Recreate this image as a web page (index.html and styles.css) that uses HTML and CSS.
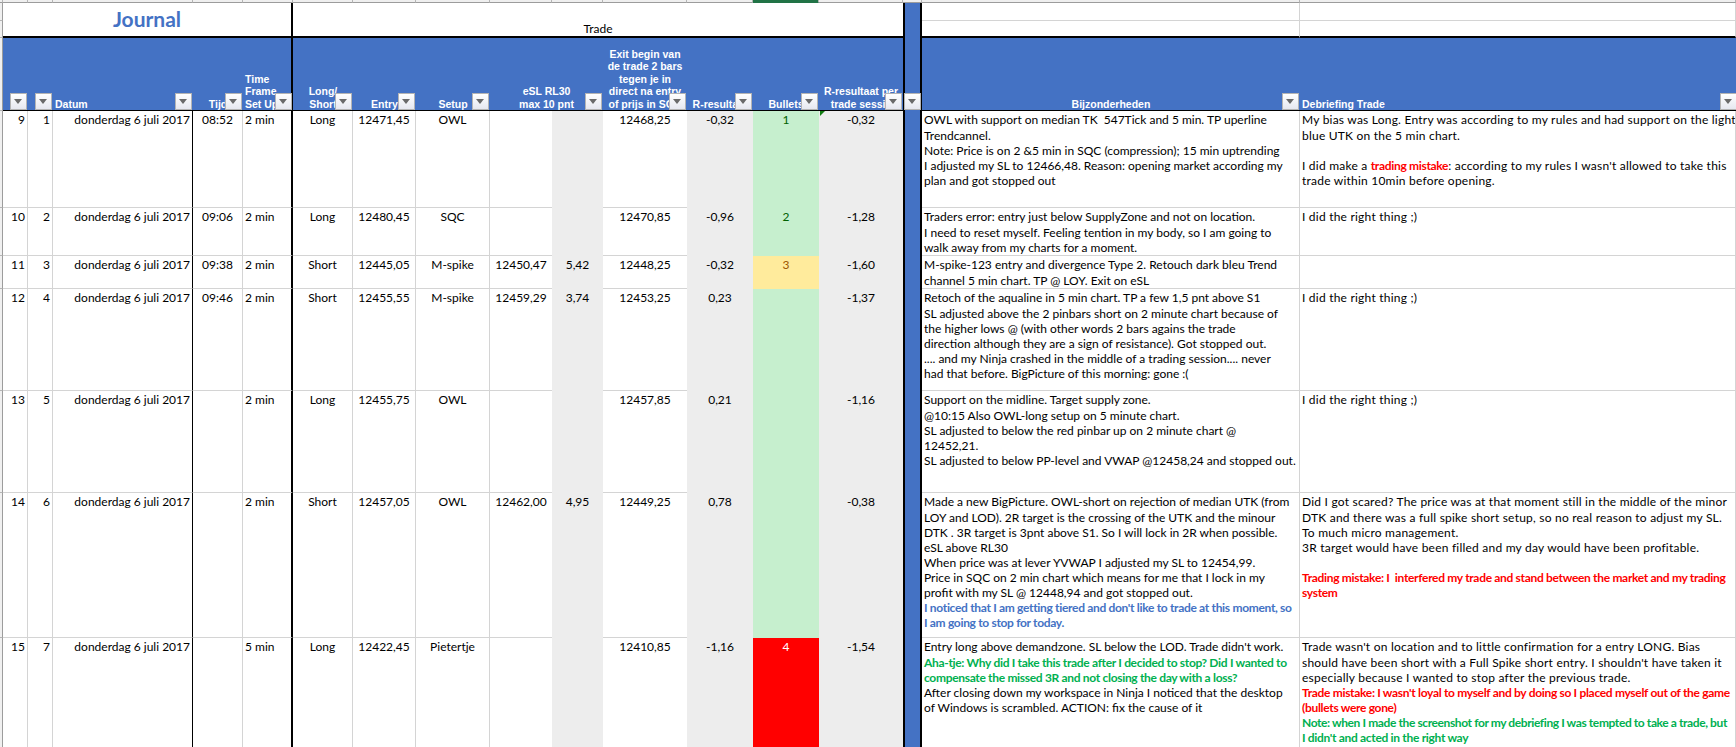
FILE: index.html
```html
<!DOCTYPE html>
<html lang="en">
<head>
    <meta charset="UTF-8">
    <title>Journal</title>
    <link rel="stylesheet" href="styles.css">
</head>
<body>
    <table class="sheet">
        <colgroup>
            <col class="w-hd"><col class="w-nr"><col class="w-nr"><col class="w-date"><col class="w-time"><col class="w-tf">
            <col class="w-ls"><col class="w-entry"><col class="w-setup"><col class="w-esl"><col class="w-delta"><col class="w-exit">
            <col class="w-res"><col class="w-bullet"><col class="w-sess"><col class="w-sep"><col class="w-note"><col class="w-deb">
        </colgroup>

        <!-- column header remnants at the top -->
        <tr class="h-strip">
            <td class="strip"></td><td class="strip"></td><td class="strip"></td><td class="strip"></td><td class="strip"></td><td class="strip"></td>
            <td class="strip"></td><td class="strip"></td><td class="strip"></td><td class="strip"></td><td class="strip"></td><td class="strip"></td>
            <td class="strip"></td><td class="strip selected"></td><td class="strip"></td><td class="strip"></td><td class="strip"></td><td class="strip"></td>
        </tr>

        <!-- titles -->
        <tr class="h-a">
            <td class="hd"></td>
            <td class="title" colspan="5" rowspan="2">Journal</td>
            <td class="trade" colspan="9" rowspan="2">Trade</td>
            <td class="sep" rowspan="10"><i class="fb fb-sep"></i></td>
            <td class="blank"></td>
            <td class="blank"></td>
        </tr>
        <tr class="h-b">
            <td class="hd"></td>
            <td class="blank thick"></td>
            <td class="blank thick"></td>
        </tr>

        <!-- blue header -->
        <tr class="h-head">
            <td class="hd"></td>
            <th><i class="fb"></i></th>
            <th><i class="fb"></i></th>
            <th class="left pad-date">Datum<i class="fb"></i></th>
            <th>Tijd<i class="fb"></i></th>
            <th class="left bk">Time<br>Frame<br>Set Up<i class="fb fb-over"></i></th>
            <th>Long/<br>Short<i class="fb"></i></th>
            <th>Entry<i class="fb"></i></th>
            <th>Setup<i class="fb"></i></th>
            <th colspan="2">eSL RL30<br>max 10 pnt<i class="fb"></i></th>
            <th>Exit begin van<br>de trade 2 bars<br>tegen je in<br>direct na entry<br>of prijs in SQC<i class="fb"></i></th>
            <th>R-resultaat<i class="fb"></i></th>
            <th>Bullets<i class="fb"></i></th>
            <th>R-resultaat per<br>trade sessie<i class="fb"></i></th>
            <th>Bijzonderheden<i class="fb"></i></th>
            <th class="left">Debriefing Trade<i class="fb fb-over"></i></th>
        </tr>

        <tr class="h-97">
            <td class="hd"></td>
            <td class="r">9</td><td class="r">1</td><td class="r bk1">donderdag 6 juli 2017</td><td class="c">08:52</td><td class="l bk">2 min</td>
            <td class="c">Long</td><td class="c">12471,45</td><td class="c">OWL</td><td class="c nr"></td><td class="c g"></td><td class="c nr">12468,25</td>
            <td class="c g">-0,32</td><td class="c ok">1</td><td class="c g flag">-0,32</td>
            <td class="l"><span class="ln">OWL with support on median TK  547Tick and 5 min. TP uperline</span><span class="ln">Trendcannel.</span><span class="ln">Note: Price is on 2 &amp;5 min in SQC (compression); 15 min uptrending</span><span class="ln">I adjusted my SL to 12466,48. Reason: opening market according my</span><span class="ln">plan and got stopped out</span></td>
            <td class="l deb"><span class="ln">My bias was Long. Entry was according to my rules and had support on the light</span><span class="ln">blue UTK on the 5 min chart.</span><span class="ln">&nbsp;</span><span class="ln">I did make a <b class="red">trading mistake</b>: according to my rules I wasn't allowed to take this</span><span class="ln">trade within 10min before opening.</span></td>
        </tr>
        <tr class="h-48">
            <td class="hd"></td>
            <td class="r">10</td><td class="r">2</td><td class="r bk1">donderdag 6 juli 2017</td><td class="c">09:06</td><td class="l bk">2 min</td>
            <td class="c">Long</td><td class="c">12480,45</td><td class="c">SQC</td><td class="c nr"></td><td class="c g"></td><td class="c nr">12470,85</td>
            <td class="c g">-0,96</td><td class="c ok">2</td><td class="c g">-1,28</td>
            <td class="l"><span class="ln">Traders error: entry just below SupplyZone and not on location.</span><span class="ln">I need to reset myself. Feeling tention in my body, so I am going to</span><span class="ln">walk away from my charts for a moment.</span></td>
            <td class="l deb"><span class="ln">I did the right thing ;)</span></td>
        </tr>
        <tr class="h-32">
            <td class="hd"></td>
            <td class="r">11</td><td class="r">3</td><td class="r bk1">donderdag 6 juli 2017</td><td class="c">09:38</td><td class="l bk">2 min</td>
            <td class="c">Short</td><td class="c">12445,05</td><td class="c">M-spike</td><td class="c nr">12450,47</td><td class="c g">5,42</td><td class="c nr">12448,25</td>
            <td class="c g">-0,32</td><td class="c warn">3</td><td class="c g">-1,60</td>
            <td class="l"><span class="ln">M-spike-123 entry and divergence Type 2. Retouch dark bleu Trend</span><span class="ln">channel 5 min chart. TP @ LOY. Exit on eSL</span></td>
            <td class="l deb"></td>
        </tr>
        <tr class="h-102">
            <td class="hd"></td>
            <td class="r">12</td><td class="r">4</td><td class="r bk1">donderdag 6 juli 2017</td><td class="c">09:46</td><td class="l bk">2 min</td>
            <td class="c">Short</td><td class="c">12455,55</td><td class="c">M-spike</td><td class="c nr">12459,29</td><td class="c g">3,74</td><td class="c nr">12453,25</td>
            <td class="c g">0,23</td><td class="c ok"></td><td class="c g">-1,37</td>
            <td class="l"><span class="ln">Retoch of the aqualine in 5 min chart. TP a few 1,5 pnt above S1</span><span class="ln">SL adjusted above the 2 pinbars short on 2 minute chart because of</span><span class="ln">the higher lows @ (with other words 2 bars agains the trade</span><span class="ln">direction although they are a sign of resistance). Got stopped out.</span><span class="ln">.... and my Ninja crashed in the middle of a trading session.... never</span><span class="ln">had that before. BigPicture of this morning: gone :(</span></td>
            <td class="l deb"><span class="ln">I did the right thing ;)</span></td>
        </tr>
        <tr class="h-102">
            <td class="hd"></td>
            <td class="r">13</td><td class="r">5</td><td class="r bk1">donderdag 6 juli 2017</td><td class="c"></td><td class="l bk">2 min</td>
            <td class="c">Long</td><td class="c">12455,75</td><td class="c">OWL</td><td class="c nr"></td><td class="c g"></td><td class="c nr">12457,85</td>
            <td class="c g">0,21</td><td class="c ok"></td><td class="c g">-1,16</td>
            <td class="l"><span class="ln">Support on the midline. Target supply zone.</span><span class="ln">@10:15 Also OWL-long setup on 5 minute chart.</span><span class="ln">SL adjusted to below the red pinbar up on 2 minute chart @</span><span class="ln">12452,21.</span><span class="ln">SL adjusted to below PP-level and VWAP @12458,24 and stopped out.</span></td>
            <td class="l deb"><span class="ln">I did the right thing ;)</span></td>
        </tr>
        <tr class="h-145">
            <td class="hd"></td>
            <td class="r">14</td><td class="r">6</td><td class="r bk1">donderdag 6 juli 2017</td><td class="c"></td><td class="l bk">2 min</td>
            <td class="c">Short</td><td class="c">12457,05</td><td class="c">OWL</td><td class="c nr">12462,00</td><td class="c g">4,95</td><td class="c nr">12449,25</td>
            <td class="c g">0,78</td><td class="c ok"></td><td class="c g">-0,38</td>
            <td class="l"><span class="ln">Made a new BigPicture. OWL-short on rejection of median UTK (from</span><span class="ln">LOY and LOD). 2R target is the crossing of the UTK and the minour</span><span class="ln">DTK . 3R target is 3pnt above S1. So I will lock in 2R when possible.</span><span class="ln">eSL above RL30</span><span class="ln">When price was at lever YVWAP I adjusted my SL to 12454,99.</span><span class="ln">Price in SQC on 2 min chart which means for me that I lock in my</span><span class="ln">profit with my SL @ 12448,94 and got stopped out.</span><span class="ln blue">I noticed that I am getting tiered and don't like to trade at this moment, so</span><span class="ln blue">I am going to stop for today.</span></td>
            <td class="l deb"><span class="ln">Did I got scared? The price was at that moment still in the middle of the minor</span><span class="ln">DTK and there was a full spike short setup, so no real reason to adjust my SL.</span><span class="ln">To much micro management.</span><span class="ln">3R target would have been filled and my day would have been profitable.</span><span class="ln">&nbsp;</span><span class="ln red">Trading mistake: I  interfered my trade and stand between the market and my trading</span><span class="ln red">system</span></td>
        </tr>
        <tr class="h-111">
            <td class="hd"></td>
            <td class="r">15</td><td class="r">7</td><td class="r bk1">donderdag 6 juli 2017</td><td class="c"></td><td class="l bk">5 min</td>
            <td class="c">Long</td><td class="c">12422,45</td><td class="c">Pietertje</td><td class="c nr"></td><td class="c g"></td><td class="c nr">12410,85</td>
            <td class="c g">-1,16</td><td class="c bad">4</td><td class="c g">-1,54</td>
            <td class="l"><span class="ln">Entry long above demandzone. SL below the LOD. Trade didn't work.</span><span class="ln green">Aha-tje: Why did I take this trade after I decided to stop? Did I wanted to</span><span class="ln green">compensate the missed 3R and not closing the day with a loss?</span><span class="ln">After closing down my workspace in Ninja I noticed that the desktop</span><span class="ln">of Windows is scrambled. ACTION: fix the cause of it</span></td>
            <td class="l deb"><span class="ln">Trade wasn't on location and to little confirmation for a entry LONG. Bias</span><span class="ln">should have been short with a Full Spike short entry. I shouldn't have taken it</span><span class="ln">especially because I wanted to stop after the previous trade.</span><span class="ln red">Trade mistake: I wasn't loyal to myself and by doing so I placed myself out of the game</span><span class="ln red">(bullets were gone)</span><span class="ln green tight">Note: when I made the screenshot for my debriefing I was tempted to take a trade, but</span><span class="ln green">I didn't and acted in the right way</span></td>
        </tr>
    </table>
</body>
</html>
```

FILE: styles.css
```css
html, body {
    margin: 0;
    height: 747px;
    overflow: hidden;
    background: #fff;
}

.sheet {
    table-layout: fixed;
    width: 1736px;
    border-collapse: separate;
    border-spacing: 0;
    font-family: Lato, "Liberation Sans", sans-serif;
    font-size: 12px;
    line-height: 15px;
    color: #000;
}

/* column widths */
.w-hd { width: 3px; }
.w-nr { width: 25px; }
.w-date { width: 140px; }
.w-time { width: 50px; }
.w-tf { width: 50px; }
.w-ls { width: 60px; }
.w-entry { width: 63px; }
.w-setup { width: 74px; }
.w-esl { width: 62px; }
.w-delta { width: 51px; }
.w-exit { width: 84px; }
.w-res { width: 66px; }
.w-bullet { width: 66px; }
.w-sess { width: 84px; }
.w-sep { width: 19px; }
.w-note { width: 378px; }
.w-deb { width: 436px; }

/* row heights */
.h-strip { height: 3px; }
.h-a { height: 18px; }
.h-b { height: 17px; }
.h-head { height: 73px; }
.h-97 { height: 97px; }
.h-48 { height: 48px; }
.h-32 { height: 32px; }
.h-102 { height: 102px; }
.h-145 { height: 145px; }
.h-111 { height: 111px; }

td, th {
    padding: 0;
    box-sizing: border-box;
}

td {
    position: relative;
    vertical-align: top;
    white-space: nowrap;
    overflow: hidden;
    padding-top: 1px;
    border-right: 1px solid #d4d4d4;
    border-bottom: 1px solid #d4d4d4;
}

.strip {
    padding: 0;
    background: #efefef;
    border-right: 1px solid #b5b5b5;
    border-bottom: 1px solid #9c9c9c;
}

.strip.selected {
    background: #217346;
    border-bottom-color: #217346;
}

.hd {
    padding: 0;
    background: #f0f0f0;
    border-right: 1px solid #9c9c9c;
    border-bottom: 1px solid #b5b5b5;
}

.title {
    padding: 0 0 2px;
    text-align: center;
    vertical-align: middle;
    color: #4472c4;
    font-size: 21px;
    line-height: 30px;
    font-weight: bold;
    border-right: 2px solid #000;
    border-bottom: 2px solid #000;
}

.trade {
    padding: 0;
    text-align: center;
    vertical-align: bottom;
    border-right: 0;
    border-bottom: 2px solid #000;
}

.sep {
    padding: 0;
    overflow: visible;
    background: #4472c4;
    border-left: 2px solid #000;
    border-right: 2px solid #000;
    border-bottom: 0;
}

.blank {
    padding: 0;
}

.blank.thick {
    border-bottom: 2px solid #000;
}

/* blue header cells */
th {
    position: relative;
    vertical-align: bottom;
    text-align: center;
    white-space: nowrap;
    background: #4472c4;
    color: #fff;
    font-family: "Liberation Sans", Arial, sans-serif;
    font-size: 10.5px;
    line-height: 12.5px;
    font-weight: bold;
    border-bottom: 1px solid #000;
}

th.left {
    text-align: left;
    padding-left: 2px;
}

th.pad-date {
    padding-left: 2px;
}

/* filter buttons */
.fb {
    position: absolute;
    right: 1px;
    bottom: 0;
    width: 17px;
    height: 17px;
    box-sizing: border-box;
    border: 1px solid #b4b4b4;
    background: linear-gradient(#ffffff, #e6e8f0);
}

.fb::after {
    content: "";
    position: absolute;
    left: 3px;
    top: 5px;
    border-left: 4.5px solid transparent;
    border-right: 4.5px solid transparent;
    border-top: 5px solid #6a6a6a;
}

.fb-over {
    right: -1px;
}

.fb-sep {
    top: 90px;
    bottom: auto;
    right: -1px;
}

/* body cells */
.c { text-align: center; }
.r { text-align: right; padding-right: 2px; }
.l { text-align: left; padding-left: 2px; }
.deb { letter-spacing: 0.22px; }

.bk { border-right: 2px solid #000; }
.bk1 { border-right: 1px solid #000; }
.nr { border-right: 0; }

.g {
    background: #ededed;
    border-right: 0;
    border-bottom: 0;
}

.ok {
    background: #c6efce;
    color: #006100;
    border-right: 0;
    border-bottom: 0;
}

.warn {
    background: #ffeb9c;
    color: #9c5700;
    border-right: 0;
    border-bottom: 0;
}

.bad {
    background: #ff0000;
    color: #fff;
    border-right: 0;
    border-bottom: 0;
}

/* little green corner on the first session value */
.flag::before {
    content: "";
    position: absolute;
    left: 1px;
    top: 0;
    border-top: 5px solid #107c10;
    border-right: 5px solid transparent;
}

.ln {
    display: block;
    white-space: pre;
}

.ln:first-child {
    height: 16px;
}

.red { color: #ff0000; font-weight: bold; letter-spacing: -0.32px; }
.blue { color: #4472c4; font-weight: bold; letter-spacing: -0.32px; }
.green { color: #00b050; font-weight: bold; letter-spacing: -0.32px; }
.green.tight { letter-spacing: -0.4px; }
```
